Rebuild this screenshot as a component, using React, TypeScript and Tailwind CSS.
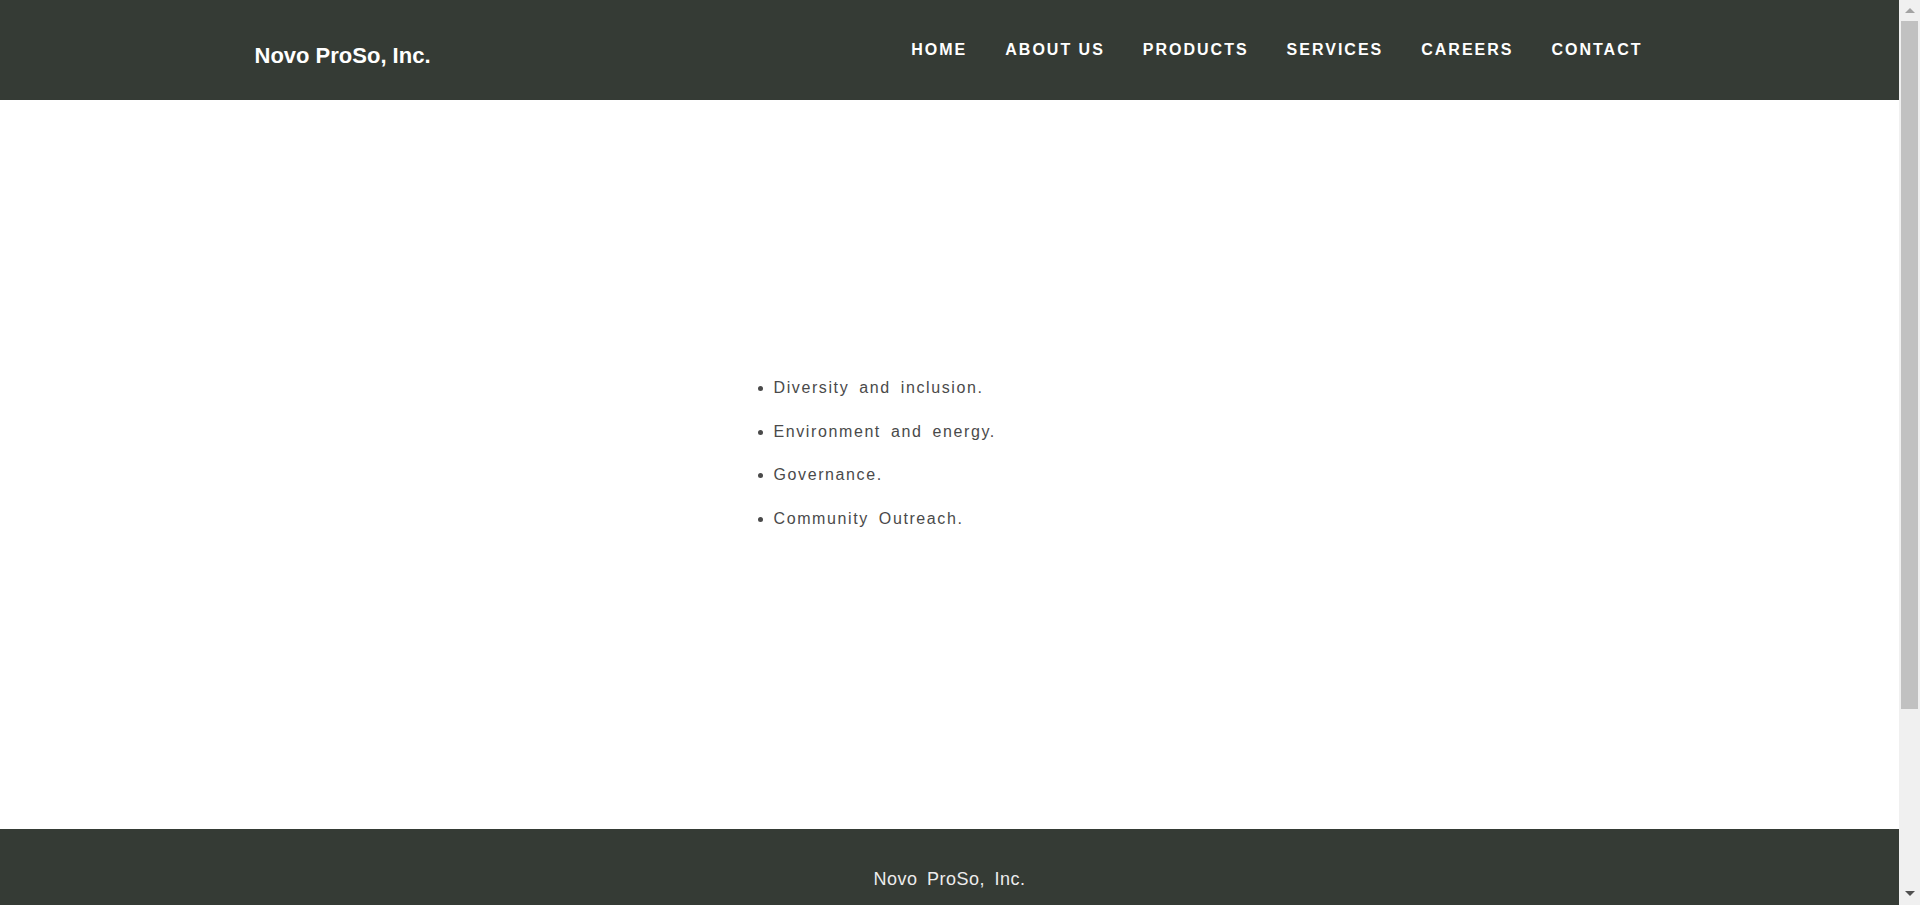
const navLinks = ["Home", "About Us", "Products", "Services", "Careers", "Contact"];

const values = [
  "Diversity and inclusion.",
  "Environment and energy.",
  "Governance.",
  "Community Outreach.",
];

const Header = () => {
  return (
    <header className="h-[100px] bg-[#353b35]">
      <div className="mx-auto flex h-full w-[1390px] items-center justify-between">
        <a
          href="#"
          className="mt-[10px] text-[22px] font-bold text-white"
        >
          Novo ProSo, Inc.
        </a>
        <nav className="flex items-center gap-[38px] pr-[2px]">
          {navLinks.map((link) => (
            <a
              key={link}
              href="#"
              className="text-[16px] font-bold tracking-[2px] text-white uppercase"
            >
              {link}
            </a>
          ))}
        </nav>
      </div>
    </header>
  );
};

const Footer = () => {
  return (
    <footer className="h-[317px] bg-[#353b35] pt-[37px]">
      <p className="text-center text-[18px] leading-[26px] tracking-[0.5px] text-[#ececec] [word-spacing:4px]">
        Novo ProSo, Inc.
      </p>
    </footer>
  );
};

// window scrollbar as it shows in the reference
const Scrollbar = () => {
  return (
    <div className="fixed top-0 right-0 flex h-screen w-[21px] flex-col items-center bg-[#f0f0f0]">
      <div className="flex h-[21px] items-center justify-center pb-[1px]">
        <div className="h-0 w-0 border-x-[5px] border-b-[5px] border-x-transparent border-b-[#a3a3a3]" />
      </div>
      <div className="h-[688px] w-[17px] bg-[#c1c1c1]" />
      <div className="flex-1" />
      <div className="flex h-[21px] items-center justify-center pb-[3px]">
        <div className="h-0 w-0 border-x-[5px] border-t-[5px] border-x-transparent border-t-[#505050]" />
      </div>
    </div>
  );
};

export default function App() {
  return (
    <div className="min-h-screen bg-white font-['Liberation_Sans',Arial,sans-serif]">
      <div className="mr-[21px]">
        <Header />
        <main className="h-[729px] pt-[276px]">
          <div className="mx-auto w-[400px]">
            <ul className="list-disc pl-6 text-[16px] text-[#4a4a4a]">
              {values.map((item) => (
                <li
                  key={item}
                  className="mb-[19.7px] leading-6 tracking-[1.6px] [word-spacing:4px]"
                >
                  {item}
                </li>
              ))}
            </ul>
          </div>
        </main>
        <Footer />
      </div>
      <Scrollbar />
    </div>
  );
}
